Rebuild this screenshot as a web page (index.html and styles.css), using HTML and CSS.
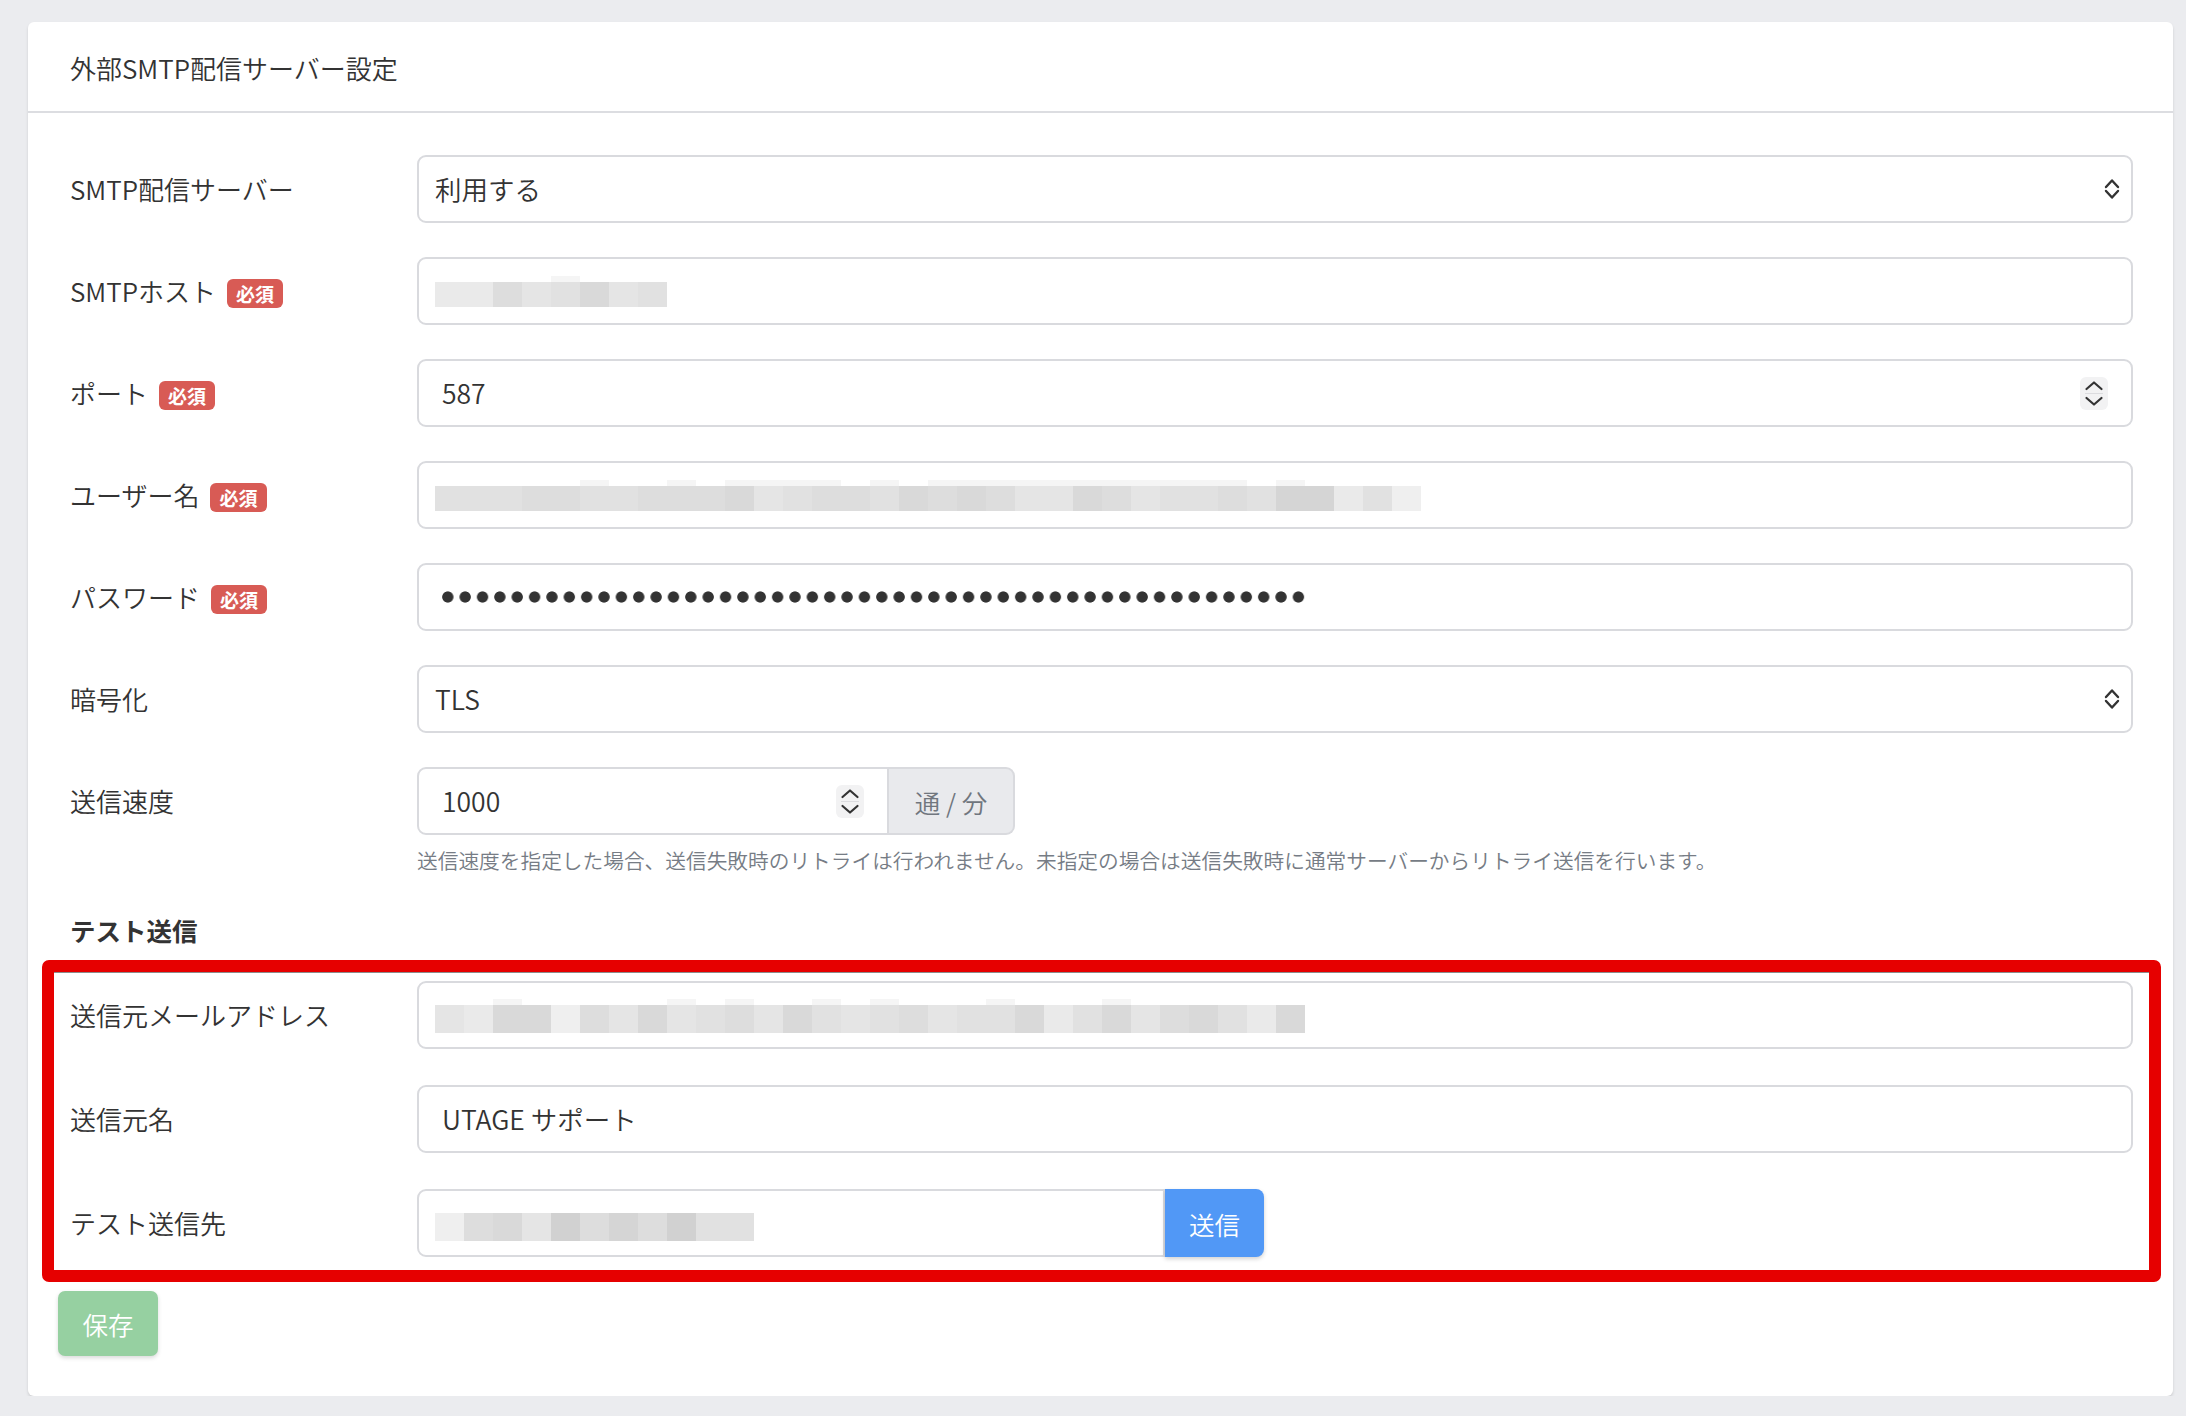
FILE: index.html
```html
<!DOCTYPE html>
<html lang="ja">
<head>
<meta charset="utf-8">
<title>外部SMTP配信サーバー設定</title>
<link rel="stylesheet" href="styles.css">
</head>
<body>
<div class="page">
  <div class="card">
    <div class="card-header">外部SMTP配信サーバー設定</div>
    <div class="card-body">
      <div class="row">
        <div class="label">SMTP配信サーバー</div>
        <div class="field select"><span class="val">利用する</span>
          <svg class="chev" width="16" height="24" viewBox="0 0 16 24"><path d="M2 10 L8 3.5 L14 10 M2 14 L8 20.5 L14 14" fill="none" stroke="#333" stroke-width="2.4" stroke-linecap="round" stroke-linejoin="round"/></svg>
        </div>
      </div>
      <div class="row">
        <div class="label">SMTPホスト<span class="badge">必須</span></div>
        <div class="field">
          <span class="mosaic"><i class="m g2"></i><i class="m g2"></i><i class="m g5"></i><i class="m g3"></i><i class="m g4 t"></i><i class="m g6"></i><i class="m g3"></i><i class="m g4"></i></span>
        </div>
      </div>
      <div class="row">
        <div class="label">ポート<span class="badge">必須</span></div>
        <div class="field num"><span class="val">587</span>
          <svg class="spin" width="28" height="33" viewBox="0 0 28 33"><rect x="0" y="0" width="28" height="33" rx="6" fill="#f2f2f3"/><path d="M6.5 12 L14 5.5 L21.5 12 M6.5 21 L14 27.5 L21.5 21" fill="none" stroke="#333" stroke-width="2.2" stroke-linecap="round" stroke-linejoin="round"/><path d="M5 16.5 H23" stroke="#dcdcdf" stroke-width="1"/></svg>
        </div>
      </div>
      <div class="row">
        <div class="label">ユーザー名<span class="badge">必須</span></div>
        <div class="field">
          <span class="mosaic"><i class="m g4"></i><i class="m g4"></i><i class="m g4"></i><i class="m g5"></i><i class="m g5"></i><i class="m g4 t"></i><i class="m g4"></i><i class="m g5"></i><i class="m g5 t"></i><i class="m g5"></i><i class="m g6 t"></i><i class="m g3 t"></i><i class="m g4 t"></i><i class="m g5 t"></i><i class="m g5"></i><i class="m g4 t"></i><i class="m g6"></i><i class="m g5 t"></i><i class="m g6 t"></i><i class="m g5 t"></i><i class="m g3 t"></i><i class="m g3 t"></i><i class="m g6 t"></i><i class="m g5 t"></i><i class="m g3 t"></i><i class="m g4 t"></i><i class="m g4 t"></i><i class="m g5 t"></i><i class="m g4"></i><i class="m g7 t"></i><i class="m g7"></i><i class="m g2"></i><i class="m g4"></i><i class="m g1"></i></span>
        </div>
      </div>
      <div class="row">
        <div class="label">パスワード<span class="badge">必須</span></div>
        <div class="field"><span class="dots" aria-label="password"></span></div>
      </div>
      <div class="row">
        <div class="label">暗号化</div>
        <div class="field select"><span class="val">TLS</span>
          <svg class="chev" width="16" height="24" viewBox="0 0 16 24"><path d="M2 10 L8 3.5 L14 10 M2 14 L8 20.5 L14 14" fill="none" stroke="#333" stroke-width="2.4" stroke-linecap="round" stroke-linejoin="round"/></svg>
        </div>
      </div>
      <div class="row last">
        <div class="label">送信速度</div>
        <div class="group">
          <div class="field num speed"><span class="val">1000</span>
            <svg class="spin" width="28" height="33" viewBox="0 0 28 33"><rect x="0" y="0" width="28" height="33" rx="6" fill="#f2f2f3"/><path d="M6.5 12 L14 5.5 L21.5 12 M6.5 21 L14 27.5 L21.5 21" fill="none" stroke="#333" stroke-width="2.2" stroke-linecap="round" stroke-linejoin="round"/><path d="M5 16.5 H23" stroke="#dcdcdf" stroke-width="1"/></svg>
          </div>
          <div class="addon">通 / 分</div>
        </div>
      </div>
      <p class="help">送信速度を指定した場合、送信失敗時のリトライは行われません。未指定の場合は送信失敗時に通常サーバーからリトライ送信を行います。</p>
      <h3 class="section">テスト送信</h3>
      <div class="highlight">
        <div class="row">
          <div class="label">送信元メールアドレス</div>
          <div class="field">
            <span class="mosaic tall"><i class="m g3"></i><i class="m g2"></i><i class="m g6 t"></i><i class="m g6"></i><i class="m g1"></i><i class="m g5"></i><i class="m g3"></i><i class="m g6"></i><i class="m g3 t"></i><i class="m g4"></i><i class="m g5 t"></i><i class="m g3"></i><i class="m g6"></i><i class="m g4 t"></i><i class="m g3"></i><i class="m g4 t"></i><i class="m g5"></i><i class="m g3"></i><i class="m g4"></i><i class="m g4 t"></i><i class="m g6"></i><i class="m g2"></i><i class="m g4"></i><i class="m g6 t"></i><i class="m g3"></i><i class="m g5"></i><i class="m g6"></i><i class="m g4"></i><i class="m g2"></i><i class="m g6"></i></span>
          </div>
        </div>
        <div class="row">
          <div class="label">送信元名</div>
          <div class="field num"><span class="val">UTAGE サポート</span></div>
        </div>
        <div class="row last">
          <div class="label">テスト送信先</div>
          <div class="group">
            <div class="field dest">
              <span class="mosaic tall"><i class="m g1"></i><i class="m g5"></i><i class="m g6"></i><i class="m g3"></i><i class="m g8"></i><i class="m g5"></i><i class="m g7"></i><i class="m g5"></i><i class="m g8"></i><i class="m g4"></i><i class="m g4"></i></span>
            </div>
            <button class="btn-send" type="button">送信</button>
          </div>
        </div>
      </div>
      <button class="btn-save" type="button">保存</button>
    </div>
  </div>
</div>
</body>
</html>
```

FILE: styles.css
```css
* { box-sizing: border-box; }

html, body {
  margin: 0;
  padding: 0;
  background: #ebecef;
}

body {
  font-family: "Noto Sans CJK JP", "Noto Sans", sans-serif;
  color: #333;
  font-size: 26px;
  font-weight: 350;
}

.page {
  padding: 22px 13px 0 28px;
}

.card {
  background: #fff;
  border-radius: 6px;
  box-shadow: 0 2px 3px rgba(0, 0, 0, 0.13);
}

.card-header {
  height: 91px;
  border-bottom: 2px solid #dcdde1;
  padding-left: 42px;
  display: flex;
  align-items: center;
  font-size: 26px;
  padding-top: 2px;
}

.card-body {
  padding: 42px 40px 40px 42px;
}

.row {
  display: flex;
  align-items: center;
  height: 68px;
  margin-bottom: 34px;
}

.row.last {
  margin-bottom: 0;
}

.label {
  width: 347px;
  flex: none;
  display: flex;
  align-items: center;
  gap: 11px;
  font-size: 26px;
  line-height: 1;
}

.badge {
  display: inline-block;
  background: #d85b55;
  color: #fff;
  font-size: 19px;
  font-weight: bold;
  height: 29px;
  line-height: 29px;
  padding: 0 9px;
  border-radius: 6px;
  margin-top: 4px;
}

.field {
  flex: 1;
  height: 68px;
  border: 2px solid #d9dade;
  border-radius: 9px;
  display: flex;
  align-items: center;
  justify-content: space-between;
  padding: 0 23px 0 16px;
  font-size: 26.5px;
  background: #fff;
}

.field.num {
  padding-left: 23px;
}

.field.select {
  padding-right: 11px;
}

.val {
  line-height: 1;
}

.chev {
  flex: none;
}

.spin {
  flex: none;
}

.mosaic {
  display: flex;
  margin-top: 7px;
}

.m {
  display: block;
  width: 29px;
  height: 25px;
}

.mosaic.tall .m {
  height: 28px;
}

.m.t {
  box-shadow: 0 -6px 0 #f5f5f5;
}

.g1 { background: #efefef; }
.g2 { background: #eaeaea; }
.g3 { background: #e5e5e5; }
.g4 { background: #e1e1e1; }
.g5 { background: #dddddd; }
.g6 { background: #d9d9d9; }
.g7 { background: #d5d5d5; }
.g8 { background: #d1d1d1; }

.dots {
  display: block;
  width: 868px;
  height: 12px;
  margin-left: 7px;
  background-image: radial-gradient(circle at 5.8px 6px, #333 5.2px, rgba(51, 51, 51, 0) 6px);
  background-size: 17.36px 12px;
  background-repeat: repeat-x;
}

.group {
  display: flex;
  height: 68px;
}

.field.speed {
  flex: none;
  width: 472px;
  border-radius: 9px 0 0 9px;
}

.addon {
  width: 126px;
  height: 68px;
  background: #e9eaed;
  border: 2px solid #d9dade;
  border-left: 0;
  border-radius: 0 9px 9px 0;
  display: flex;
  align-items: center;
  justify-content: center;
  color: #70767e;
  font-size: 25.5px;
}

.help {
  margin: 10px 0 0 347px;
  font-size: 20.7px;
  line-height: 31px;
  color: #767c85;
}

.section {
  margin: 35px 0 0 0;
  font-size: 25.5px;
  line-height: 38px;
  font-weight: bold;
  color: #333;
}

.highlight {
  margin: 11px -28px 0 -28px;
  border: 12px solid #e60000;
  border-radius: 7px;
  padding: 9px 16px 13px 16px;
  box-shadow: inset 0 1px 0 #8c8c8c;
}

.highlight .row {
  margin-bottom: 36px;
}

.highlight .row.last {
  margin-bottom: 0;
}

.highlight .group {
  flex: none;
}

.field.dest {
  flex: none;
  width: 748px;
  border-radius: 9px 0 0 9px;
}

.btn-send {
  width: 99px;
  height: 68px;
  border: 0;
  background: #5198f6;
  color: #fff;
  font-family: inherit;
  font-weight: 350;
  font-size: 25.5px;
  border-radius: 0 8px 8px 0;
  box-shadow: 0 2px 4px rgba(0, 0, 0, 0.18);
  padding: 0;
}

.btn-save {
  display: block;
  margin: 9px 0 0 -12px;
  width: 100px;
  height: 65px;
  border: 0;
  background: #96d0a1;
  color: #fff;
  font-family: inherit;
  font-weight: 350;
  font-size: 25.5px;
  border-radius: 7px;
  box-shadow: 0 2px 4px rgba(0, 0, 0, 0.15);
  padding: 0;
}
```
